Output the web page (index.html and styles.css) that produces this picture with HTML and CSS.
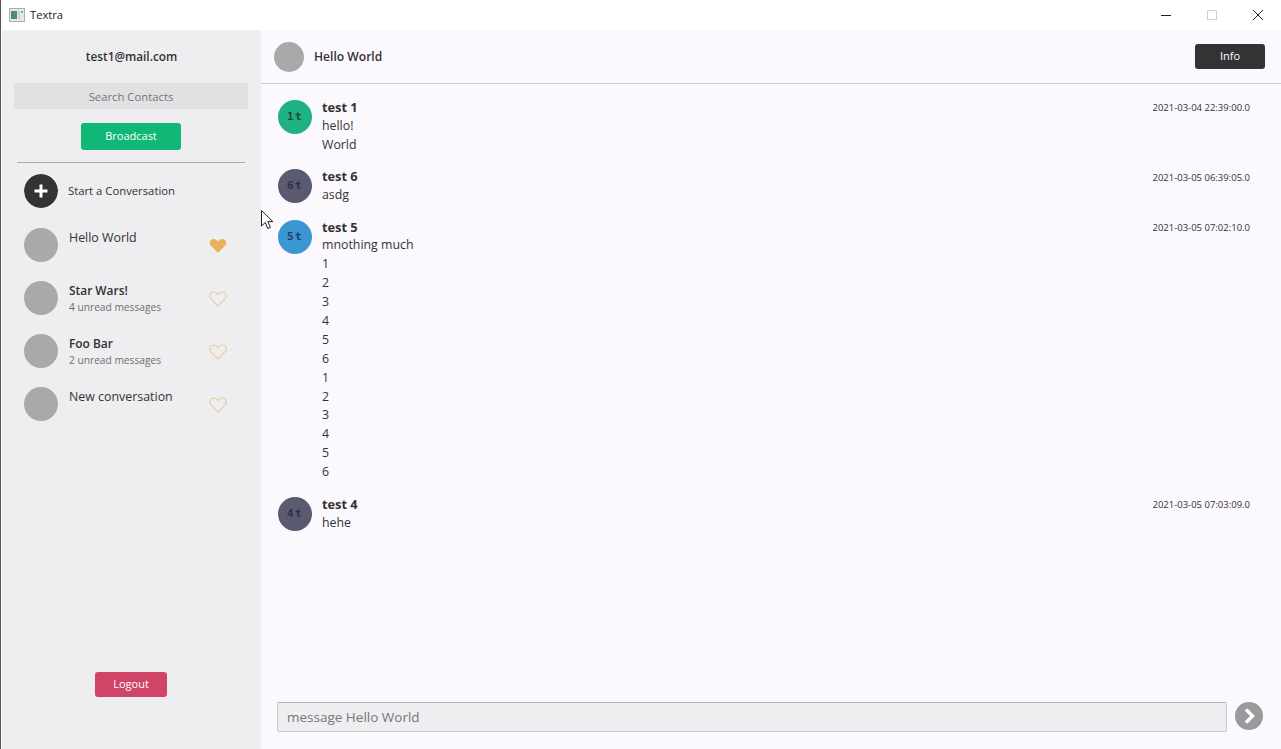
FILE: index.html
```html
<!DOCTYPE html>
<html lang="en">
<head>
    <meta charset="UTF-8">
    <meta name="viewport" content="width=device-width, initial-scale=1.0">
    <title>Textra</title>
    <link rel="stylesheet" href="styles.css">
</head>
<body>
    <div class="titlebar">
        <div class="app-name">
            <svg class="app-icon" width="16" height="14" viewBox="0 0 16 14">
                <rect x="0.5" y="0.5" width="15" height="13" fill="#e4e8e8" stroke="#a9b0b0"/>
                <rect x="2" y="3" width="6" height="8" fill="#4f8a80"/>
                <rect x="9" y="3" width="2" height="8" fill="#c5d0d0"/>
                <rect x="12" y="3" width="2" height="2" fill="#8fa5a5"/>
            </svg>
            <span>Textra</span>
        </div>
        <div class="window-btns">
            <svg width="12" height="12" viewBox="0 0 12 12"><path d="M1 6.5h10" stroke="#222" stroke-width="1"/></svg>
            <svg width="12" height="12" viewBox="0 0 12 12"><rect x="1.5" y="1.5" width="9" height="9" fill="none" stroke="#cfcfcf"/></svg>
            <svg width="12" height="12" viewBox="0 0 12 12"><path d="M1 1l10 10M11 1L1 11" stroke="#222" stroke-width="1"/></svg>
        </div>
    </div>

    <div class="app">
        <!-- left side with contacts -->
        <div class="sidebar">
            <div class="email">test1@mail.com</div>
            <div class="search">Search Contacts</div>
            <div class="broadcast-wrap"><button class="btn btn-green">Broadcast</button></div>
            <div class="divider"></div>

            <div class="start-row">
                <svg class="avatar" width="34" height="34" viewBox="0 0 34 34">
                    <circle cx="17" cy="17" r="17" fill="#333235"/>
                    <path d="M17 10.5v13M10.5 17h13" stroke="#fff" stroke-width="3"/>
                </svg>
                <span>Start a Conversation</span>
            </div>

            <div class="contact">
                <div class="avatar grey"></div>
                <div class="contact-text"><div class="contact-name">Hello World</div></div>
                <svg class="heart" width="18" height="16" viewBox="0 0 18 16"><path d="M9 15L1.800 7.600C-.6 4.800 1.200 1 4.600 1 6.400 1 8 2 9 3.600 10 2 11.600 1 13.400 1c3.400 0 5.200 3.800 2.800 6.600z" fill="#e8b25c"/></svg>
            </div>
            <div class="contact">
                <div class="avatar grey"></div>
                <div class="contact-text">
                    <div class="contact-name bold">Star Wars!</div>
                    <div class="unread">4 unread messages</div>
                </div>
                <svg class="heart" width="18" height="16" viewBox="0 0 18 16"><path d="M9 15L1.800 7.600C-.6 4.800 1.200 1 4.600 1 6.400 1 8 2 9 3.600 10 2 11.600 1 13.400 1c3.400 0 5.200 3.800 2.800 6.600z" fill="none" stroke="#e6cf9f" stroke-width="1.100"/></svg>
            </div>
            <div class="contact">
                <div class="avatar grey"></div>
                <div class="contact-text">
                    <div class="contact-name bold">Foo Bar</div>
                    <div class="unread">2 unread messages</div>
                </div>
                <svg class="heart" width="18" height="16" viewBox="0 0 18 16"><path d="M9 15L1.800 7.600C-.6 4.800 1.200 1 4.600 1 6.400 1 8 2 9 3.600 10 2 11.600 1 13.400 1c3.400 0 5.200 3.800 2.800 6.600z" fill="none" stroke="#e6cf9f" stroke-width="1.100"/></svg>
            </div>
            <div class="contact">
                <div class="avatar grey"></div>
                <div class="contact-text"><div class="contact-name">New conversation</div></div>
                <svg class="heart" width="18" height="16" viewBox="0 0 18 16"><path d="M9 15L1.800 7.600C-.6 4.800 1.200 1 4.600 1 6.400 1 8 2 9 3.600 10 2 11.600 1 13.400 1c3.400 0 5.200 3.800 2.800 6.600z" fill="none" stroke="#e6cf9f" stroke-width="1.100"/></svg>
            </div>

            <div class="logout-wrap"><button class="btn btn-red">Logout</button></div>
        </div>

        <!-- chat -->
        <div class="chat">
            <div class="chat-header">
                <div class="avatar-big"></div>
                <div class="chat-title">Hello World</div>
                <button class="btn btn-dark">Info</button>
            </div>

            <div class="messages">
                <div class="message">
                    <div class="avatar initials green">1t</div>
                    <div class="message-body">
                        <div class="sender">test 1</div>
                        <div>hello!</div>
                        <div>World</div>
                    </div>
                    <div class="time">2021-03-04 22:39:00.0</div>
                </div>
                <div class="message">
                    <div class="avatar initials slate">6t</div>
                    <div class="message-body">
                        <div class="sender">test 6</div>
                        <div>asdg</div>
                    </div>
                    <div class="time">2021-03-05 06:39:05.0</div>
                </div>
                <div class="message">
                    <div class="avatar initials blue">5t</div>
                    <div class="message-body">
                        <div class="sender">test 5</div>
                        <div>mnothing much</div>
                        <div>1</div>
                        <div>2</div>
                        <div>3</div>
                        <div>4</div>
                        <div>5</div>
                        <div>6</div>
                        <div>1</div>
                        <div>2</div>
                        <div>3</div>
                        <div>4</div>
                        <div>5</div>
                        <div>6</div>
                    </div>
                    <div class="time">2021-03-05 07:02:10.0</div>
                </div>
                <div class="message">
                    <div class="avatar initials slate">4t</div>
                    <div class="message-body">
                        <div class="sender">test 4</div>
                        <div>hehe</div>
                    </div>
                    <div class="time">2021-03-05 07:03:09.0</div>
                </div>
            </div>

            <div class="composer">
                <div class="composer-input">message Hello World</div>
                <svg width="28" height="28" viewBox="0 0 28 28">
                    <circle cx="14" cy="14" r="14" fill="#9a999c"/>
                    <path d="M11 7.500l6.500 6.500-6.500 6.500" fill="none" stroke="#fff" stroke-width="3.400"/>
                </svg>
            </div>
        </div>
    </div>

    <!-- mouse pointer in the capture -->
    <svg class="pointer" width="13" height="20" viewBox="0 0 13 20">
        <path d="M.5.5v15.500l3.800-3.500 2.500 6 2.600-1.100-2.500-5.800h5z" fill="#fff" stroke="#222"/>
    </svg>
</body>
</html>
```

FILE: styles.css
```css
*{
    box-sizing: border-box;
}
body{
    margin: 0;
    height: 749px;
    overflow: hidden;
    background-color: white;
    font-family: "Open Sans", "Noto Sans", sans-serif;
    color: #333235;
    border-left: 1px solid #555;
    display: flex;
    flex-direction: column;
}
.titlebar{
    height: 30px;
    flex-shrink: 0;
    background-color: white;
    display: flex;
    justify-content: space-between;
    align-items: center;
    padding-bottom: 1px;
}
.app-name{
    display: flex;
    align-items: center;
    gap: 5px;
    padding-left: 8px;
    font-size: 11.2px;
    color: #222;
}
.window-btns{
    display: flex;
    gap: 34px;
    padding-right: 17px;
}
.app{
    flex: 1;
    display: flex;
    min-height: 0;
}
.sidebar{
    width: 259px;
    margin-left: 1px;
    background-color: #eeedef;
    display: flex;
    flex-direction: column;
    padding-top: 18px;
}
.email{
    text-align: center;
    font-size: 11.8px;
    font-weight: 600;
    line-height: 16px;
    margin-bottom: 19px;
}
.search{
    margin: 0 13px 0 12px;
    height: 26px;
    line-height: 27px;
    text-align: center;
    font-size: 11.3px;
    color: #77767a;
    background-color: #e1e0e2;
}
.broadcast-wrap{
    display: flex;
    justify-content: center;
    margin-top: 14px;
    padding-right: 1px;
}
.btn{
    border: none;
    border-radius: 3px;
    font-family: inherit;
    font-size: 11px;
    color: white;
    padding: 0 0 2px;
}
.btn-green{
    background-color: #10b877;
    width: 100px;
    height: 27px;
}
.btn-red{
    background-color: #d04468;
    width: 72px;
    height: 25px;
}
.btn-dark{
    background-color: #333235;
    width: 70px;
    height: 25px;
}
.divider{
    margin: 12px 16px 0 15px;
    height: 1px;
    background-color: #a9a8aa;
}
.start-row{
    display: flex;
    align-items: center;
    gap: 10px;
    padding-left: 22px;
    margin-top: 11px;
    font-size: 11.3px;
    line-height: 14px;
}
.start-row span{
    margin-top: -1px;
}
.avatar{
    width: 34px;
    height: 34px;
    border-radius: 50%;
    flex-shrink: 0;
}
.grey{
    background-color: #a9a8aa;
}
.contact{
    height: 53px;
    display: flex;
    align-items: center;
    padding-left: 22px;
}
.start-row + .contact{
    margin-top: 10px;
}
.contact-text{
    width: 140px;
    margin-left: 11px;
    height: 34px;
}
.contact-name{
    font-size: 12.4px;
    line-height: 16px;
    margin-top: 2px;
}
.bold{
    font-weight: 600;
    font-size: 11.9px;
    margin-top: 1px;
}
.unread{
    font-size: 10.2px;
    line-height: 16px;
    margin-top: 1px;
    color: #6f6e72;
}
.heart{
    margin-top: 3px;
}
.logout-wrap{
    margin-top: auto;
    margin-bottom: 52px;
    display: flex;
    justify-content: center;
    padding-right: 1px;
}
.chat{
    flex: 1;
    background-color: #fbf9fd;
    display: flex;
    flex-direction: column;
    min-width: 0;
}
.chat-header{
    height: 54px;
    flex-shrink: 0;
    display: flex;
    align-items: center;
    padding: 0 16px 0 13px;
    border-bottom: 1px solid #cfcdd2;
}
.avatar-big{
    width: 30px;
    height: 30px;
    border-radius: 50%;
    background-color: #a9a8aa;
}
.chat-title{
    flex: 1;
    margin-left: 10px;
    font-size: 12.1px;
    font-weight: 600;
}
.messages{
    flex: 1;
    padding: 13.9px 31px 0 17px;
    display: flex;
    flex-direction: column;
    gap: 12.8px;
}
.message{
    display: flex;
    font-size: 12.35px;
    line-height: 18.9px;
}
.initials{
    margin-top: 2px;
    display: flex;
    align-items: center;
    justify-content: center;
    font-family: "DejaVu Sans Mono", monospace;
    font-size: 11px;
    font-weight: 700;
    letter-spacing: 1.5px;
    padding-top: 1px;
}
.green{
    background-color: #1eb182;
    color: #1e4a3c;
}
.slate{
    background-color: #5a5b70;
    color: #2f3148;
}
.blue{
    background-color: #3a97d3;
    color: #1d3f5e;
}
.message-body{
    flex: 1;
    margin-left: 10px;
}
.sender{
    font-weight: 700;
    font-size: 12.8px;
    line-height: 18.7px;
}
.time{
    font-size: 9.5px;
    line-height: 18px;
    padding-top: 1.5px;
}
.composer{
    height: 47px;
    padding: 0 18px 0 16px;
    flex-shrink: 0;
    display: flex;
    gap: 8px;
    align-items: flex-start;
}
.composer-input{
    flex: 1;
    height: 30px;
    line-height: 28px;
    padding-left: 9px;
    font-size: 13.5px;
    color: #77767a;
    background-color: #eeedef;
    border: 1px solid #c8c7ca;
    border-top-color: #b5b4b7;
    border-radius: 2px;
}
.pointer{
    position: absolute;
    left: 261px;
    top: 210px;
}
```
